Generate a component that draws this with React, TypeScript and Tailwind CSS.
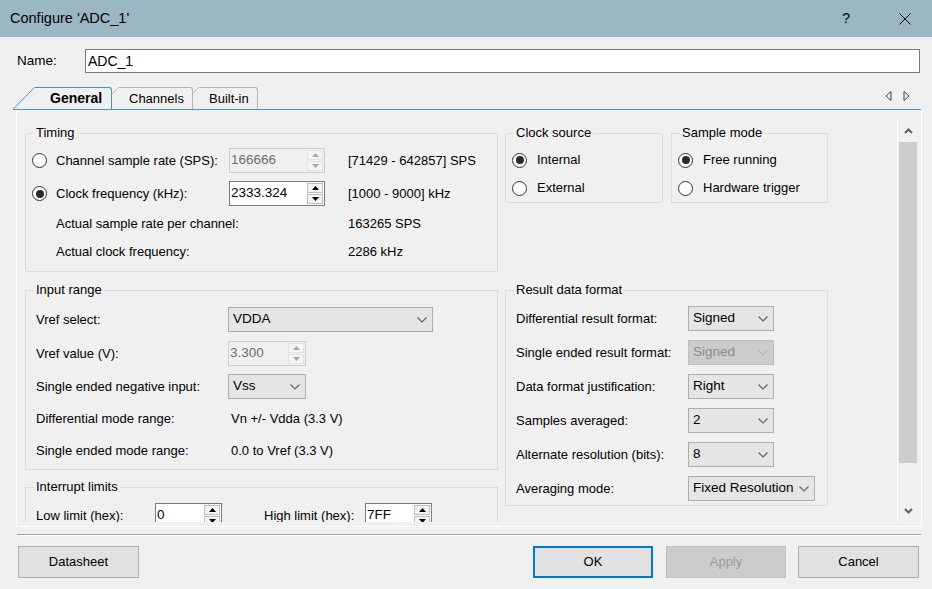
import type { ReactNode } from 'react';

function Radio({ checked = false }: { checked?: boolean }) {
  return (
    <span className="flex h-[15px] w-[15px] shrink-0 items-center justify-center rounded-full border border-[#333333] bg-white">
      {checked && <span className="h-[8px] w-[8px] rounded-full bg-[#2b2b2b]" />}
    </span>
  );
}

function Triangle({ up, color }: { up: boolean; color: string }) {
  return (
    <svg width="7" height="4" viewBox="0 0 7 4">
      <path d={up ? 'M0 4 L3.5 0 L7 4 Z' : 'M0 0 L3.5 4 L7 0 Z'} fill={color} />
    </svg>
  );
}

function ChevronDown({ color }: { color: string }) {
  return (
    <svg width="10" height="6" viewBox="0 0 10 6" className="shrink-0">
      <path d="M0.5 0.5 L5 5 L9.5 0.5" fill="none" stroke={color} strokeWidth="1.1" />
    </svg>
  );
}

function SpinBox({ value, width, disabled = false }: { value: string; width: string; disabled?: boolean }) {
  const arrow = disabled ? '#a8a8a8' : '#000000';
  const half = disabled ? 'border-[#e3e3e3]' : 'border-[#bcbcbc]';
  return (
    <div
      className={`flex h-[25px] shrink-0 border ${width} ${
        disabled ? 'border-[#cccccc] bg-[#f0f0f0] text-[#6d6d6d]' : 'border-[#7a7a7a] bg-white'
      }`}
    >
      <span className="flex flex-1 items-center pl-[1px] text-[13.5px]">{value}</span>
      <div className="flex w-[18px] flex-col gap-px p-px">
        <span className={`flex flex-1 items-center justify-center border bg-[#f4f4f4] ${half}`}>
          <Triangle up color={arrow} />
        </span>
        <span className={`flex flex-1 items-center justify-center border bg-[#f4f4f4] ${half}`}>
          <Triangle up={false} color={arrow} />
        </span>
      </div>
    </div>
  );
}

function Select({ value, width, disabled = false }: { value: string; width: string; disabled?: boolean }) {
  return (
    <div
      className={`flex h-[25px] shrink-0 items-center border pl-[4px] pr-[5px] ${width} ${
        disabled ? 'border-[#bfbfbf] bg-[#cccccc] text-[#8a8a8a]' : 'border-[#adadad] bg-[#e5e5e5]'
      }`}
    >
      <span className="flex-1 text-[13.5px] whitespace-nowrap">{value}</span>
      <ChevronDown color={disabled ? '#b4b4b4' : '#606060'} />
    </div>
  );
}

function Group({ title, className, children }: { title: string; className: string; children: ReactNode }) {
  return (
    <fieldset className={`border border-[#dcdcdc] pl-[6px] ${className}`}>
      <legend className="ml-[2px] px-[2px] leading-[16px]">{title}</legend>
      {children}
    </fieldset>
  );
}

function Tab({ label, active = false, className, bodyClass }: { label: string; active?: boolean; className: string; bodyClass: string }) {
  const stroke = active ? '#3c96dc' : '#b4b4b4';
  return (
    <div className={`relative flex h-[22px] ${className}`}>
      <svg width="22" height="22" viewBox="0 0 22 22" className="shrink-0">
        <path d="M0 22 L20.5 1.5 Q21.2 0.5 22 0.5 L22 22 Z" fill="#f0f0f0" />
        <path d="M0.3 22 L20.5 1.5 Q21.2 0.5 22 0.5" fill="none" stroke={stroke} />
      </svg>
      <div
        className={`flex items-center rounded-tr-[3px] border-t border-r bg-[#f0f0f0] ${bodyClass} ${
          active ? 'border-[#3c96dc] text-[14px] font-bold' : 'border-[#b4b4b4]'
        }`}
      >
        {label}
      </div>
    </div>
  );
}

function DialogButton({ label, variant = 'normal', className }: { label: string; variant?: 'normal' | 'default' | 'disabled'; className: string }) {
  const look =
    variant === 'default'
      ? 'border-2 border-[#0078d7] bg-[#e1e1e1]'
      : variant === 'disabled'
        ? 'border border-[#bfbfbf] bg-[#cccccc] text-[#9a9a9a]'
        : 'border border-[#adadad] bg-[#e1e1e1]';
  return <div className={`flex h-[32px] items-center justify-center ${look} ${className}`}>{label}</div>;
}

export default function App() {
  return (
    <div className="flex h-[589px] w-[932px] flex-col overflow-hidden bg-[#f0f0f0] font-['Liberation_Sans',Arial,sans-serif] text-[13px] text-black">
      <div className="flex h-[37px] shrink-0 items-center bg-[#9bb7c4] pl-[10px] pr-[21px]">
        <span className="text-[14.5px]">Configure 'ADC_1'</span>
        <span className="ml-auto text-[14px]">?</span>
        <svg width="12" height="12" viewBox="0 0 12 12" className="ml-[49px]">
          <path d="M0.5 0.5 L11.5 11.5 M11.5 0.5 L0.5 11.5" stroke="#000" strokeWidth="1" />
        </svg>
      </div>

      <div className="mt-[12px] flex h-[24px] items-center pr-[12px] pl-[17px]">
        <span className="w-[68px] text-[13.5px]">Name:</span>
        <div className="flex h-[24px] flex-1 items-center border border-[#7a7a7a] bg-white pl-[2px] text-[14px]">ADC_1</div>
      </div>

      <div className="mt-[14px] ml-[13px] flex h-[23px] w-[908px] items-end border-b border-[#3c96dc]">
        <Tab label="General" active className="z-30" bodyClass="w-[77px] pl-[15px]" />
        <Tab label="Channels" className="z-20 -ml-[15px]" bodyClass="w-[74px] pl-[10px]" />
        <Tab label="Built-in" className="z-10 -ml-[16px]" bodyClass="w-[59px] pl-[10px]" />
        <div className="mr-[11px] mb-[8px] ml-auto flex items-center gap-[11px]">
          <svg width="7" height="10" viewBox="0 0 7 10">
            <path d="M6 0.5 L1 5 L6 9.5 Z" fill="none" stroke="#404040" />
          </svg>
          <svg width="7" height="10" viewBox="0 0 7 10">
            <path d="M1 0.5 L6 5 L1 9.5 Z" fill="none" stroke="#404040" />
          </svg>
        </div>
      </div>

      <div className="ml-[16px] h-[417px] w-[906px] shrink-0 border-x border-b border-white pt-[10px] pr-[3px] pb-[4px]">
        <div className="flex h-[402px]">
          <div className="flex flex-1 items-start gap-[7px] overflow-hidden pt-[5px] pl-[8px]">
            <div className="flex w-[473px] shrink-0 flex-col">
              <Group title="Timing" className="pt-[7px] pb-[9px]">
                <div className="flex h-[25px] items-center">
                  <Radio />
                  <span className="ml-[9px] w-[173px]">Channel sample rate (SPS):</span>
                  <SpinBox value="166666" width="w-[96px]" disabled />
                  <span className="ml-[23px]">[71429 - 642857] SPS</span>
                </div>
                <div className="mt-[8px] flex h-[25px] items-center">
                  <Radio checked />
                  <span className="ml-[9px] w-[173px]">Clock frequency (kHz):</span>
                  <SpinBox value="2333.324" width="w-[96px]" />
                  <span className="ml-[23px]">[1000 - 9000] kHz</span>
                </div>
                <div className="mt-[8px] flex h-[20px] items-center pl-[24px]">
                  <span className="w-[292px]">Actual sample rate per channel:</span>
                  <span>163265 SPS</span>
                </div>
                <div className="mt-[8px] flex h-[20px] items-center pl-[24px]">
                  <span className="w-[292px]">Actual clock frequency:</span>
                  <span>2286 kHz</span>
                </div>
              </Group>

              <Group title="Input range" className="mt-[10px] pt-[9px] pb-[8px]">
                <div className="ml-[4px] flex h-[25px] items-center">
                  <span className="w-[192px]">Vref select:</span>
                  <Select value="VDDA" width="w-[205px]" />
                </div>
                <div className="mt-[9px] ml-[4px] flex h-[25px] items-center">
                  <span className="w-[192px]">Vref value (V):</span>
                  <SpinBox value="3.300" width="w-[78px]" disabled />
                </div>
                <div className="mt-[8px] ml-[4px] flex h-[25px] items-center">
                  <span className="w-[192px]">Single ended negative input:</span>
                  <Select value="Vss" width="w-[78px]" />
                </div>
                <div className="mt-[10px] ml-[4px] flex h-[20px] items-center">
                  <span className="w-[192px]">Differential mode range:</span>
                  <span className="pl-[3px]">Vn +/- Vdda (3.3 V)</span>
                </div>
                <div className="mt-[12px] ml-[4px] flex h-[20px] items-center">
                  <span className="w-[192px]">Single ended mode range:</span>
                  <span className="pl-[3px]">0.0 to Vref (3.3 V)</span>
                </div>
              </Group>

              <Group title="Interrupt limits" className="mt-[9px] pt-[8px] pb-[8px]">
                <div className="ml-[4px] flex h-[25px] items-center">
                  <span className="w-[119px]">Low limit (hex):</span>
                  <SpinBox value="0" width="w-[67px]" />
                  <span className="ml-[42px] w-[101px]">High limit (hex):</span>
                  <SpinBox value="7FF" width="w-[67px]" />
                </div>
              </Group>
            </div>

            <div className="flex w-[323px] shrink-0 flex-col">
              <div className="flex gap-[8px]">
                <Group title="Clock source" className="w-[158px] pt-[9px] pb-[4px]">
                  <div className="flex h-[20px] items-center">
                    <Radio checked />
                    <span className="ml-[10px]">Internal</span>
                  </div>
                  <div className="mt-[8px] flex h-[20px] items-center">
                    <Radio />
                    <span className="ml-[10px]">External</span>
                  </div>
                </Group>
                <Group title="Sample mode" className="w-[157px] pt-[9px] pb-[4px]">
                  <div className="flex h-[20px] items-center">
                    <Radio checked />
                    <span className="ml-[10px]">Free running</span>
                  </div>
                  <div className="mt-[8px] flex h-[20px] items-center">
                    <Radio />
                    <span className="ml-[10px]">Hardware trigger</span>
                  </div>
                </Group>
              </div>

              <Group title="Result data format" className="mt-[79px] flex flex-col gap-[9px] pt-[8px] pb-[4px]">
                <div className="ml-[4px] flex h-[25px] items-center">
                  <span className="w-[172px]">Differential result format:</span>
                  <Select value="Signed" width="w-[86px]" />
                </div>
                <div className="ml-[4px] flex h-[25px] items-center">
                  <span className="w-[172px]">Single ended result format:</span>
                  <Select value="Signed" width="w-[86px]" disabled />
                </div>
                <div className="ml-[4px] flex h-[25px] items-center">
                  <span className="w-[172px]">Data format justification:</span>
                  <Select value="Right" width="w-[86px]" />
                </div>
                <div className="ml-[4px] flex h-[25px] items-center">
                  <span className="w-[172px]">Samples averaged:</span>
                  <Select value="2" width="w-[86px]" />
                </div>
                <div className="ml-[4px] flex h-[25px] items-center">
                  <span className="w-[172px]">Alternate resolution (bits):</span>
                  <Select value="8" width="w-[86px]" />
                </div>
                <div className="ml-[4px] flex h-[25px] items-center">
                  <span className="w-[172px]">Averaging mode:</span>
                  <Select value="Fixed Resolution" width="w-[127px]" />
                </div>
              </Group>
            </div>
          </div>

          <div className="flex w-[21px] shrink-0 flex-col border-l border-white">
            <div className="flex h-[22px] items-center justify-center">
              <svg width="9" height="6" viewBox="0 0 9 6">
                <path d="M1 5 L4.5 1.5 L8 5" fill="none" stroke="#606060" strokeWidth="2" />
              </svg>
            </div>
            <div className="mx-[1px] h-[321px] bg-[#cdcdcd]" />
            <div className="flex-1" />
            <div className="flex h-[22px] items-center justify-center">
              <svg width="9" height="6" viewBox="0 0 9 6">
                <path d="M1 1 L4.5 4.5 L8 1" fill="none" stroke="#606060" strokeWidth="2" />
              </svg>
            </div>
          </div>
        </div>
      </div>

      <div className="mt-[7px] ml-[17px] w-[904px] border-t border-b border-t-[#a0a0a0] border-b-white" />

      <div className="mt-[10px] flex items-center pr-[13px] pl-[18px]">
        <DialogButton label="Datasheet" className="w-[121px]" />
        <DialogButton label="OK" variant="default" className="ml-auto w-[120px]" />
        <DialogButton label="Apply" variant="disabled" className="ml-[13px] w-[120px]" />
        <DialogButton label="Cancel" className="ml-[12px] w-[121px]" />
      </div>
    </div>
  );
}
